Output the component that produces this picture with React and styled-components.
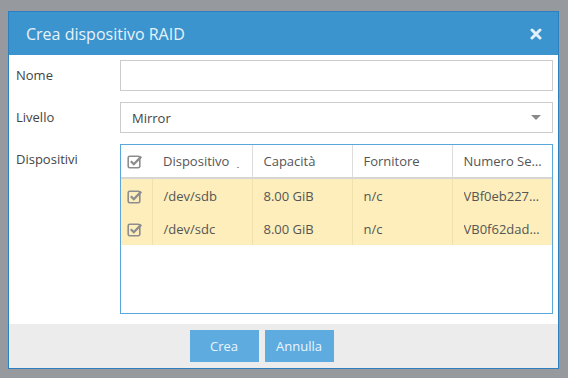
import styled, { createGlobalStyle } from 'styled-components';

const GlobalStyle = createGlobalStyle`
	html, body {
		margin: 0;
		background: #96999e;
		font-family: "Open Sans", "Liberation Sans", sans-serif;
	}
	body {
		padding: 11px 9px 9px 8px;
	}
`;

const Dialog = styled.div`
	width: 551px;
	height: 358px;
	box-sizing: border-box;
	border: 1px solid #2c80bf;
	background: #fff;
	display: flex;
	flex-direction: column;
`;

const Header = styled.div`
	height: 43px;
	background: #3c94ce;
	display: flex;
	align-items: center;
	justify-content: space-between;
	padding: 0 16px 0 17px;
`;

const Title = styled.h1`
	margin: 0;
	font-size: 16px;
	font-weight: 400;
	color: #e6f2fa;
`;

const CloseButton = styled.button`
	border: 0;
	background: none;
	padding: 0;
	display: flex;
	cursor: pointer;
`;

const Body = styled.div`
	flex: 1;
	display: grid;
	grid-template-columns: 111px 1fr;
	grid-auto-rows: min-content;
	row-gap: 11px;
	padding: 5px 5px 0 0;
`;

const Label = styled.label`
	font-size: 13px;
	line-height: 31px;
	color: #444;
	padding-left: 7px;
`;

const Input = styled.input`
	height: 31px;
	box-sizing: border-box;
	border: 1px solid #ccc;
	padding: 0 10px;
	font: inherit;
	font-size: 13px;
	outline: none;
`;

const Select = styled.div`
	height: 31px;
	box-sizing: border-box;
	border: 1px solid #ccc;
	padding: 0 11px;
	display: flex;
	align-items: center;
	justify-content: space-between;
	font-size: 13px;
	color: #444;
`;

const Caret = styled.span`
	width: 0;
	height: 0;
	border-left: 5px solid transparent;
	border-right: 5px solid transparent;
	border-top: 5px solid #8a8a8a;
`;

const TableBox = styled.div`
	height: 170px;
	box-sizing: border-box;
	border: 1px solid #5ba6da;
	overflow: hidden;
`;

const Table = styled.table`
	width: 100%;
	border-collapse: collapse;
	table-layout: fixed;
	font-size: 13px;
	color: #555;
`;

const Th = styled.th`
	height: 32px;
	font-weight: 400;
	text-align: left;
	padding: 0 6px 0 ${(p) => (p.$check ? '6px' : '11px')};
	border-bottom: 2px solid #d6d6d6;
	border-left: ${(p) => (p.$divider ? '1px solid #dcdcdc' : '0')};
	white-space: nowrap;
`;

const Tr = styled.tr`
	background: ${(p) => (p.$selected ? '#fdeebb' : '#fff')};
`;

const Td = styled.td`
	height: 33px;
	padding: 0 6px 0 ${(p) => (p.$check ? '6px' : '11px')};
	border-left: ${(p) => (p.$check ? '0' : '1px solid #f0e2ad')};
	white-space: nowrap;
`;

const Cut = styled.span`
	display: block;
	overflow: hidden;
	text-overflow: ellipsis;
	white-space: nowrap;
`;

const SortMark = styled.span`
	display: inline-block;
	width: 2px;
	height: 1px;
	background: #999;
	margin-left: 8px;
	vertical-align: -2px;
`;

const Footer = styled.div`
	height: 44px;
	background: #ececec;
	display: flex;
	justify-content: center;
	align-items: flex-start;
	gap: 6px;
	padding: 6px 44px 0 0;
	box-sizing: border-box;
`;

const Button = styled.button`
	width: 69px;
	height: 32px;
	border: 0;
	background: #5eabe0;
	color: #eaf5fc;
	font-family: inherit;
	font-size: 13px;
	cursor: pointer;
`;

const CheckIcon = () => (
	<svg width="16" height="16" viewBox="0 0 16 16" style={{ display: 'block' }}>
		<rect x="1.2" y="3.2" width="11.6" height="11.6" rx="1.6" fill="none" stroke="#8d8d8d" strokeWidth="1.6" />
		<path d="M3.8 8.2 L6.8 11.2 L14.2 3.6" fill="none" stroke="#8d8d8d" strokeWidth="2.3" />
	</svg>
);

const CloseIcon = () => (
	<svg width="12" height="12" viewBox="0 0 12 12">
		<path d="M2 2 L10 10 M10 2 L2 10" stroke="#e3f0fa" strokeWidth="3" strokeLinecap="round" />
	</svg>
);

const disks = [
	{ dev: '/dev/sdb', size: '8.00 GiB', vendor: 'n/c', serial: 'VBf0eb2270-1a2b3c4d' },
	{ dev: '/dev/sdc', size: '8.00 GiB', vendor: 'n/c', serial: 'VB0f62dad9-5e6f7a8b' },
];

const App = () => {
	return (
		<>
			<GlobalStyle />
			<Dialog>
				<Header>
					<Title>Crea dispositivo RAID</Title>
					<CloseButton aria-label="Chiudi">
						<CloseIcon />
					</CloseButton>
				</Header>
				<Body>
					<Label>Nome</Label>
					<Input />
					<Label>Livello</Label>
					<Select>
						Mirror
						<Caret />
					</Select>
					<Label>Dispositivi</Label>
					<TableBox>
						<Table>
							<colgroup>
								<col style={{ width: 31 }} />
								<col style={{ width: 100 }} />
								<col style={{ width: 100 }} />
								<col style={{ width: 100 }} />
								<col />
							</colgroup>
							<thead>
								<tr>
									<Th $check>
										<CheckIcon />
									</Th>
									<Th>
										Dispositivo
										<SortMark />
									</Th>
									<Th $divider>Capacità</Th>
									<Th $divider>Fornitore</Th>
									<Th $divider>
										<Cut>Numero Seriale</Cut>
									</Th>
								</tr>
							</thead>
							<tbody>
								{disks.map((d) => (
									<Tr key={d.dev} $selected>
										<Td $check>
											<CheckIcon />
										</Td>
										<Td>{d.dev}</Td>
										<Td>{d.size}</Td>
										<Td>{d.vendor}</Td>
										<Td>
											<Cut>{d.serial}</Cut>
										</Td>
									</Tr>
								))}
							</tbody>
						</Table>
					</TableBox>
				</Body>
				<Footer>
					<Button>Crea</Button>
					<Button>Annulla</Button>
				</Footer>
			</Dialog>
		</>
	);
};

export default App;
